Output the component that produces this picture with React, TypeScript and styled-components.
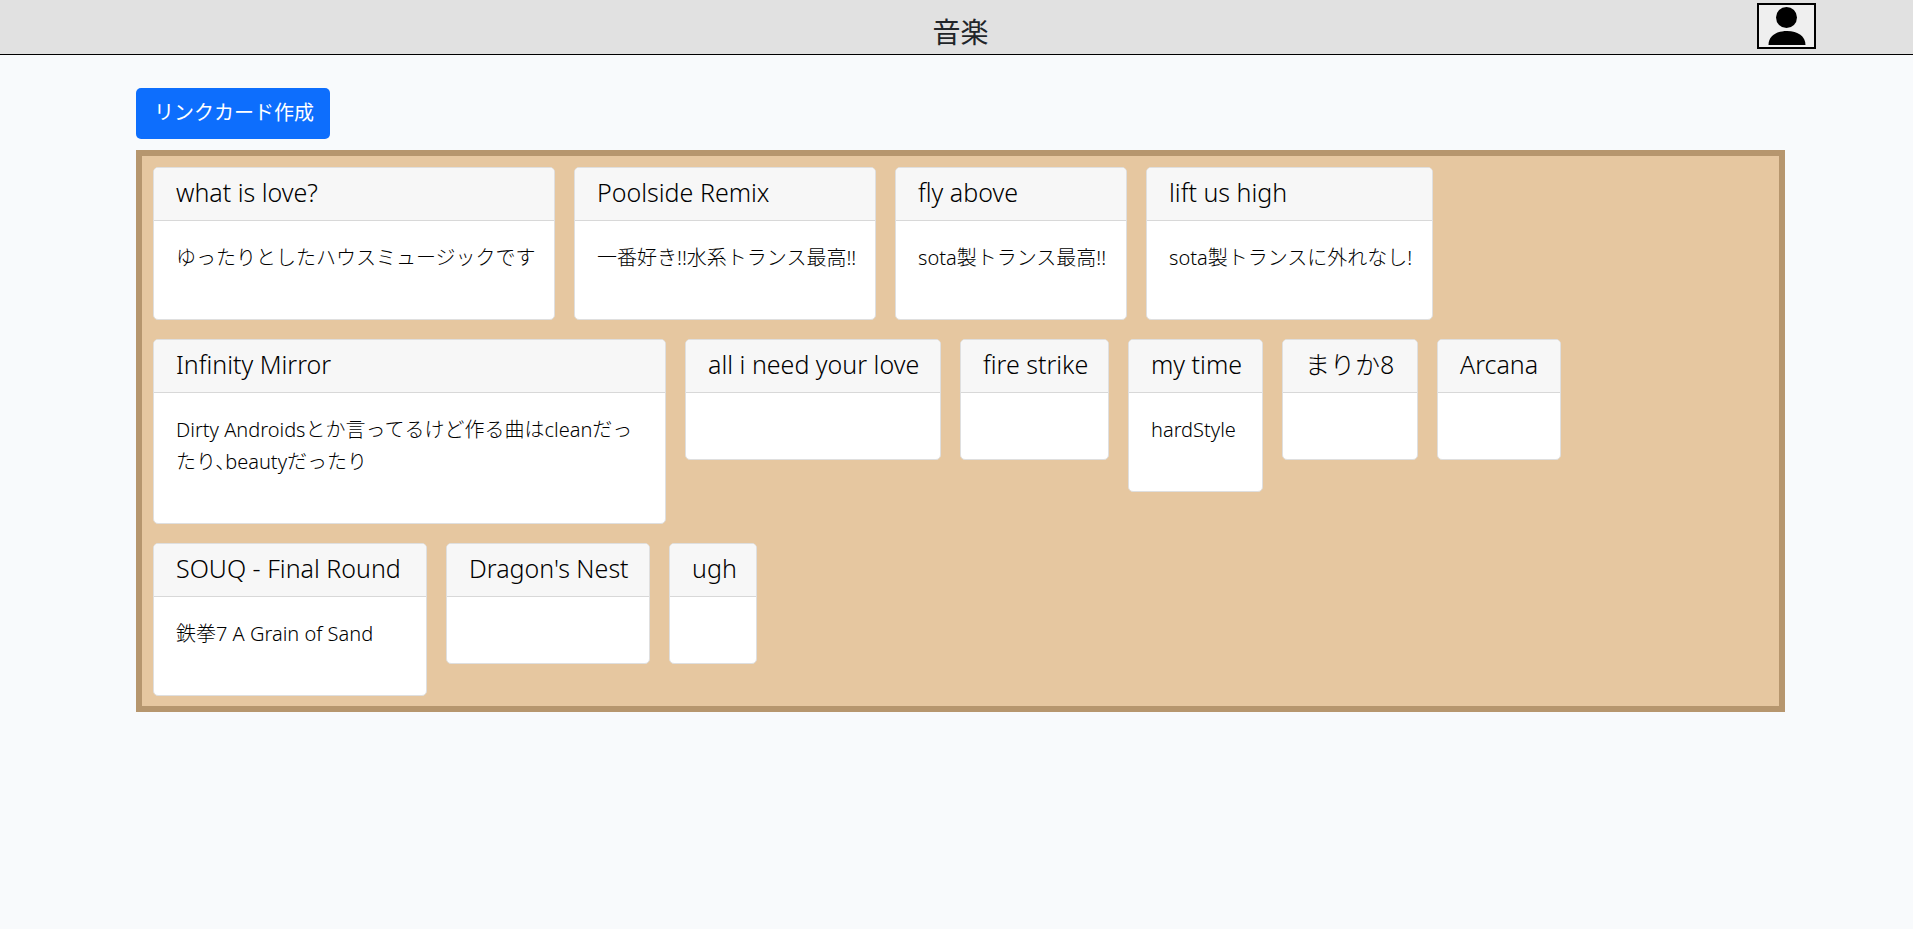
import React from 'react';
import styled, { createGlobalStyle } from 'styled-components';

const GlobalStyle = createGlobalStyle`
  *, *::before, *::after { box-sizing: border-box; }
  body {
    margin: 0;
    background: #f8fafc;
    color: #212529;
    font-family: "Noto Sans", "Noto Sans CJK JP", sans-serif;
    font-size: 20px;
    line-height: 32px;
  }
`;

const TopBar = styled.header`
  display: grid;
  grid-template-columns: 1fr auto 1fr;
  align-items: start;
  min-height: 55px;
  padding: 3px 97px 3px 105px;
  background: #e1e1e1;
  border-bottom: 1px solid #000;
`;

const PageTitle = styled.h1`
  grid-column: 2;
  margin: 0;
  padding-top: 12px;
  font-size: 28px;
  font-weight: 400;
  line-height: 34px;
`;

const AccountButton = styled.button`
  justify-self: end;
  display: flex;
  justify-content: center;
  width: 59px;
  height: 46px;
  padding: 2px 0;
  background: #efefef;
  border: 2px solid #000;
  cursor: pointer;
`;

const Main = styled.main`
  padding: 33px 128px 33px 136px;
`;

const CreateButton = styled.button`
  display: block;
  margin: 0 0 11px;
  padding: 9px 16px 10px 18px;
  background: #0d6efd;
  border: 0;
  border-radius: 5px;
  color: #fff;
  font: inherit;
  cursor: pointer;
`;

const Board = styled.section`
  display: flex;
  flex-wrap: wrap;
  align-items: flex-start;
  gap: 19px;
  padding: 11px 11px 10px;
  background: #e6c7a0;
  border: 6px solid #b6966e;
`;

const Card = styled.article<{ $width: number }>`
  width: ${({ $width }) => $width}px;
  background: #fff;
  border: 1px solid #dfdfdf;
  border-radius: 5px;
  color: #000;
  overflow: hidden;
`;

const CardTitle = styled.h2`
  margin: 0;
  padding: 9px 16px 13px 22px;
  background: #f7f7f7;
  border-bottom: 1px solid #d8d8d8;
  font-size: 25px;
  font-weight: 300;
  line-height: 30px;
  white-space: nowrap;
`;

const CardBody = styled.div`
  padding: 21px 16px 23px 22px;
`;

const Description = styled.p`
  margin: 0 0 22px;
  font-weight: 300;
  font-feature-settings: "halt";
`;

type LinkCard = { title: string; text?: string; width: number };

const cards: LinkCard[] = [
  { title: 'what is love?', text: 'ゆったりとしたハウスミュージックです', width: 402 },
  { title: 'Poolside Remix', text: '一番好き!!水系トランス最高!!', width: 302 },
  { title: 'fly above', text: 'sota製トランス最高!!', width: 232 },
  { title: 'lift us high', text: 'sota製トランスに外れなし!', width: 287 },
  {
    title: 'Infinity Mirror',
    text: 'Dirty Androidsとか言ってるけど作る曲はcleanだったり、beautyだったり',
    width: 513,
  },
  { title: 'all i need your love', width: 256 },
  { title: 'fire strike', width: 149 },
  { title: 'my time', text: 'hardStyle', width: 135 },
  { title: 'まりか8', width: 136 },
  { title: 'Arcana', width: 124 },
  { title: 'SOUQ - Final Round', text: '鉄拳7 A Grain of Sand', width: 274 },
  { title: "Dragon's Nest", width: 204 },
  { title: 'ugh', width: 88 },
];

export default function App() {
  return (
    <>
      <GlobalStyle />
      <TopBar>
        <PageTitle lang="ja">音楽</PageTitle>
        <AccountButton type="button" aria-label="アカウント">
          <svg width="38" height="38" viewBox="0 0 38 38" aria-hidden="true">
            <circle cx="18.500" cy="10.500" r="10.500" />
            <path d="M.5 38C.5 29.500 8 24 19 24s18.500 5.500 18.500 14z" />
          </svg>
        </AccountButton>
      </TopBar>
      <Main lang="ja">
        <CreateButton type="button">リンクカード作成</CreateButton>
        <Board>
          {cards.map(({ title, text, width }) => (
            <Card key={title} $width={width}>
              <CardTitle>{title}</CardTitle>
              <CardBody>
                <Description>{text}</Description>
              </CardBody>
            </Card>
          ))}
        </Board>
      </Main>
    </>
  );
}
